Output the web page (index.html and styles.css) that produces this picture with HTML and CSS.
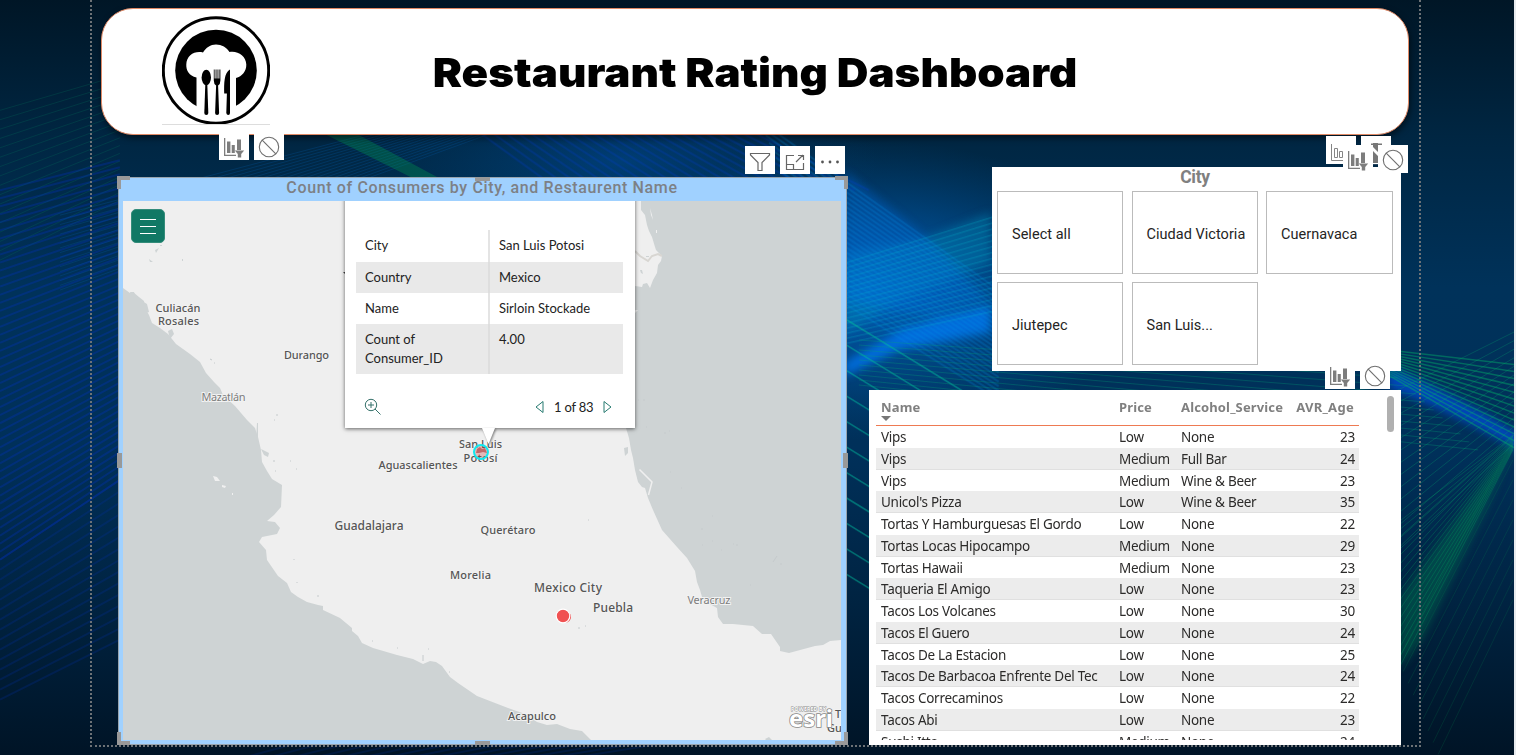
FILE: index.html
```html
<!DOCTYPE html>
<html lang="en">
<head>
<meta charset="utf-8">
<title>Restaurant Rating Dashboard</title>
<link rel="stylesheet" href="styles.css">
</head>
<body>
<svg class="backdrop" id="backdrop" viewBox="0 0 1516 755" aria-hidden="true">
  <defs>
    <radialGradient id="glow"><stop offset="0" stop-color="#0074ec" stop-opacity=".95"/><stop offset=".5" stop-color="#0068c8" stop-opacity=".5"/><stop offset="1" stop-color="#005aa8" stop-opacity="0"/></radialGradient>
    <filter id="soft" x="-30%" y="-30%" width="160%" height="160%"><feGaussianBlur stdDeviation="4"/></filter>
  </defs>
  <ellipse cx="870" cy="290" rx="270" ry="150" fill="url(#glow)" opacity=".75"/>
  <ellipse cx="620" cy="160" rx="260" ry="90" fill="url(#glow)" opacity=".3"/>
  <g filter="url(#soft)">
    <path d="M846 362L905 328L992 305V332L900 350L846 376Z" fill="#0078f4" opacity=".75"/>
    <path d="M846 252L920 240L992 212V262L900 300L846 335Z" fill="#0088b8" opacity=".4"/>
    <path d="M846 170L920 230L990 300L940 318L846 300Z" fill="#0068d8" opacity=".35"/>
    <path d="M1390 366Q1460 395 1524 436V452Q1450 410 1390 388Z" fill="#0050d8" opacity=".75"/>
    <path d="M1518 438L1485 515L1424 640L1400 670V600L1450 530Z" fill="#007a50" opacity=".4"/>
  </g>
</svg>

<svg class="sprites" aria-hidden="true">
  <symbol id="i-filter" viewBox="0 0 30 28"><g fill="#7d7d7d"><path d="M5 6h1.300v16.700H17V24H5z"/><path d="M8 9.500h3.400V21H8zM12.700 13h3.100v8h-3.100zM18 7.500h4V18h-4z"/><path d="M15.800 18.500h9.400l-3 3.500v3.500h-3.400V22z"/></g></symbol>
  <symbol id="i-none" viewBox="0 0 30 28"><g fill="none" stroke="#6e6e6e" stroke-width="1.1"><circle cx="15" cy="15" r="9.7"/><path d="M8.2 8.1L21.8 21.9"/></g></symbol>
  <symbol id="i-high" viewBox="0 0 30 28"><g fill="none" stroke="#858585"><path d="M5.500 8v16.500H18M8.500 12.500h3v9h-3zM13.500 15.500h3v6h-3z"/></g></symbol>
</svg>

<div class="report">
  <header class="banner">
    <svg class="logo" viewBox="0 0 108 110">
      <circle cx="54" cy="54.500" r="52.700" fill="#fff" stroke="#000" stroke-width="3"/>
      <circle cx="54" cy="54.500" r="40.800"/>
      <path fill="#fff" d="M34.500 61.500C27 60 24 54 24.300 48.500C24.500 39 33 34.500 41 36.500C44 31.500 48.500 28.500 54 28.500S65 31.500 67.500 36C75.500 34.500 84 39.500 84.300 48.500C84.500 55 80 60.500 74 62V100H34.500Z"/>
      <ellipse cx="44.300" cy="61.500" rx="4.700" ry="7.700"/><path d="M43.300 68h2l1 29q0 2-2 2t-2-2z"/>
      <path d="M51.800 53.500h.8v9h1v-9h.9v9h1v-9h.9v9h1v-9h1v11q0 3.500-2.300 5l1 27.500q0 2-2 2t-2-2l1-27.500q-2.300-1.500-2.300-5z"/>
      <path d="M68 53.500V97q0 2-1.700 2T64.300 97l.6-19.500h-2.700C62 67 62 57 68 53.500Z"/>
      <path d="M0 108.500h108" stroke="#ddd"/>
    </svg>
    <h1>Restaurant Rating Dashboard</h1>
    <div class="tools tools-banner"><span><svg><use href="#i-filter"/></svg></span><span><svg><use href="#i-none"/></svg></span></div>
  </header>

  <main class="board">
    <section class="map-card">
      <h2>Count of Consumers by City, and Restaurent Name</h2>
      <div class="map">
        <svg class="terrain" viewBox="123 201 718 539">
          <path class="sea" d="M123 288L130 293L133 292L139 297L144 301L145 308L149 315L152 323L160 328L168 334L176 344L190 354L200 362L206 373L214 382L220 388L223 395L235 406L247 420L255 428L258 437L261 450L262 462L267 471L272 479L282 485L281 507L274 515L267 521L275 522L280 528L277 534L262 537L259 542L266 550L267 560L278 576L287 583L291 592L298 597L307 602L318 605L323 606L323 610L340 618L352 628L352 631L358 636L362 643L373 648L397 655L413 659L423 664L430 661L436 662L442 666L450 677L458 683L477 696L508 708L525 714L537 722L547 725L557 724L570 729L582 731L591 740H123Z"/>
          <path class="sea" d="M641 201V210L645 215L647 225L649 231L652 237L655 247L656 250L662 256L661 261L658 265L657 273L653 280L650 288L647 283L643 284L642 287L635 286V310L638 310L635 313L626 428L629 438L631 450L633 458L635 470L638 482L642 487L645 488L648 498L653 510L662 530L677 547L687 558L695 571L697 582L700 590L702 597L708 603L717 608L718 617L723 624L733 624L753 626L762 634L771 634L780 647L780 651L789 653L815 646L823 645L830 641L841 640V201Z"/>
          <path class="bar" d="M639.500 469.500L652 482L648.500 495"/>
          <path d="M635 251l5 5 8 5 4-5 6-2 4 2" fill="none" stroke="#d8d6d2" stroke-width="2"/>
          <path fill="#f0f0f0" d="M213 476l4 1 3 4-5 0zM222 485l4 1-1 2-3-1zM232 493h1v2h-1zM650 208l2 7 1 5-2-5zM656 230h1v3h-1z"/>
          <path class="sea" d="M142 301l5 3 2 8-3 1zM168 331l4-2 2 5-4 5zM130 292l4 0 1 3-4 0zM261 449l8 4-1 4-4-2zM257 423h1v19h-2zM624 448l4-1v6l-3 3zM765 739l4-2 3 3h-6zM640 270h2l1 4-2-1zM646 256h3v1h-3zM155 250l4-2-3 5zM149 259l4 3h-3zM160 245h2v1h-2zM182 259h1v2h-1z"/>
          <path class="specks" d="M210 359l2 1m2 3h1m62 53v-2m-3 6h1m-2 41h2m15 0h1m5 8h1m-22 2h1m18 88v1m3 22v1m21 12v2m54 44h1m24 7h1m25 7v6m5-12h1m20 23h1m138-152h1m3-145h1m-32 3h1m53 35h1m22-13h1m4 0h2m1 27h1m17 6h2m3-2h1m0 41h1m10 16h1m30 28h1m-12 13h2m9 12h1m20 3h1m2 1h2m-36 0h1m18 5h1m55 6l-4 6m7 2h2m-32 21h1m-173 43h2m5-2h1"/>
          <path d="M343 272h2v2z" fill="#444"/>
          <g class="places">
            <text x="155.500" y="312" textLength="45">Culiacán</text><text x="158" y="325" textLength="41">Rosales</text>
            <text x="284" y="359" textLength="45">Durango</text><text class="minor" x="201.500" y="401" textLength="44">Mazatlán</text>
            <text x="459" y="448" textLength="43">San Luis</text><text x="463.500" y="461.500" textLength="34">Potosí</text>
            <text x="378.500" y="468.500" textLength="79">Aguascalientes</text><text class="major" x="334.500" y="530" textLength="69">Guadalajara</text>
            <text x="480.500" y="534" textLength="55">Querétaro</text><text x="450" y="578.500" textLength="41">Morelia</text>
            <text class="major" x="534" y="592" textLength="68">Mexico City</text><text class="major" x="593" y="611.500" textLength="40">Puebla</text>
            <text class="minor" x="687.500" y="604" textLength="43">Veracruz</text><text x="508" y="719.500" textLength="48">Acapulco</text>
            <text x="835" y="718">Tux</text><text x="827" y="732">Gutiérrez</text>
          </g>
          <circle cx="565.500" cy="617" r="5.500" fill="#f05152"/><circle cx="563" cy="616" r="6.800" fill="#f05152" stroke="#fff" stroke-width="1.200"/>
          <g class="esri"><text class="powered" x="791" y="711" textLength="35">POWERED BY</text><text x="789" y="727" textLength="44">esri</text></g>
        </svg>
        <button class="menu" aria-label="Menu"><i></i><i></i><i></i></button>
        <div class="popup">
          <dl>
            <dt>City</dt><dd>San Luis Potosi</dd>
            <dt class="shade">Country</dt><dd class="shade">Mexico</dd>
            <dt>Name</dt><dd>Sirloin Stockade</dd>
            <dt class="shade tall">Count of<br>Consumer_ID</dt><dd class="shade tall">4.00</dd>
          </dl>
          <div class="pager">
            <svg class="lens" viewBox="0 0 18 18"><g fill="none" stroke="#35716a"><circle cx="7" cy="7" r="5.700"/><path d="M4 7h6M7 4v6M11 11l5.500 5.500"/></g></svg>
            <svg class="arrow" viewBox="0 0 9 14"><path d="M8 1.500v11L1 7z"/></svg>
            <span>1 of 83</span>
            <svg class="arrow" viewBox="0 0 9 14"><path d="M1 1.500v11L8 7z"/></svg>
          </div>
          <svg class="pin" viewBox="0 0 30 34"><path class="tip" d="M9 0H22L15.500 16z" fill="#fff"/><circle cx="8" cy="24" r="7" fill="#c23b3b" fill-opacity=".3" stroke="#12e9ef" stroke-width="2"/><path d="M3 25l1-4 3-2 2 2 3-1 2 5-4-1-4 1z" fill="#c06a6a"/></svg>
        </div>
      </div>
      <i class="grip tl"></i><i class="grip tr"></i><i class="grip bl"></i><i class="grip br"></i>
      <i class="grip tc"></i><i class="grip bc"></i><i class="grip lc"></i><i class="grip rc"></i>
      <div class="tools tools-map">
        <span><svg viewBox="0 0 30 28"><path d="M5.500 7.500h19v1.500l-7.500 7.500v8h-4v-8L5.500 9z" fill="none" stroke="#666" stroke-width="1.200"/></svg></span>
        <span><svg viewBox="0 0 30 28"><path d="M14 9.500H6.500v14h17V17M6.500 18.500h7v5M16 16l7-7M18 9.500h5.500V14" fill="none" stroke="#666" stroke-width="1.200"/></svg></span>
        <span><svg viewBox="0 0 30 28"><g fill="#555"><circle cx="7.500" cy="16" r="1.400"/><circle cx="15" cy="16" r="1.400"/><circle cx="22.500" cy="16" r="1.400"/></g></svg></span>
      </div>
    </section>

    <div class="side">
      <section class="slicer">
        <h2>City</h2>
        <div class="tiles"><div>Select all</div><div>Ciudad Victoria</div><div>Cuernavaca</div><div>Jiutepec</div><div>San Luis...</div></div>
        <div class="tools tools-back"><span><svg><use href="#i-high"/></svg></span><span><svg viewBox="0 0 30 28"><path d="M10 7.500h11v2h-3v10h-5v-10h-3z" fill="#777"/></svg></span></div>
        <div class="tools tools-front"><span><svg><use href="#i-filter"/></svg></span><span><svg><use href="#i-none"/></svg></span></div>
        <svg class="peek" viewBox="0 0 5 24"><path d="M0 0h5v20H0z" fill="#fff"/><path d="M0 0h5v9L0 4zM0 8l5 5v7H0z" fill="#777"/><path d="M0 21.500h5" stroke="#27455f"/></svg>
      </section>

      <section class="table-card">
        <div class="grid">
          <div class="row head"><b>Name<i></i></b><b>Price</b><b>Alcohol_Service</b><b>AVR_Age</b></div>
          <div class="row"><span>Vips</span><span>Low</span><span>None</span><span>23</span></div>
          <div class="row"><span>Vips</span><span>Medium</span><span>Full Bar</span><span>24</span></div>
          <div class="row"><span>Vips</span><span>Medium</span><span>Wine &amp; Beer</span><span>23</span></div>
          <div class="row"><span>Unicol's Pizza</span><span>Low</span><span>Wine &amp; Beer</span><span>35</span></div>
          <div class="row"><span>Tortas Y Hamburguesas El Gordo</span><span>Low</span><span>None</span><span>22</span></div>
          <div class="row"><span>Tortas Locas Hipocampo</span><span>Medium</span><span>None</span><span>29</span></div>
          <div class="row"><span>Tortas Hawaii</span><span>Medium</span><span>None</span><span>23</span></div>
          <div class="row"><span>Taqueria El Amigo</span><span>Low</span><span>None</span><span>23</span></div>
          <div class="row"><span>Tacos Los Volcanes</span><span>Low</span><span>None</span><span>30</span></div>
          <div class="row"><span>Tacos El Guero</span><span>Low</span><span>None</span><span>24</span></div>
          <div class="row"><span>Tacos De La Estacion</span><span>Low</span><span>None</span><span>25</span></div>
          <div class="row"><span>Tacos De Barbacoa Enfrente Del Tec</span><span>Low</span><span>None</span><span>24</span></div>
          <div class="row"><span>Tacos Correcaminos</span><span>Low</span><span>None</span><span>22</span></div>
          <div class="row"><span>Tacos Abi</span><span>Low</span><span>None</span><span>23</span></div>
          <div class="row"><span>Sushi Itto</span><span>Medium</span><span>None</span><span>24</span></div>
        </div>
        <i class="scroll"></i>
        <div class="tools tools-table"><span><svg><use href="#i-filter"/></svg></span><span><svg><use href="#i-none"/></svg></span></div>
      </section>
    </div>
  </main>
</div>
<script src="backdrop.js"></script>
</body>
</html>
```

FILE: backdrop.js
```js
// Draws fans of fine light rays: each ray joins matching points of two segments.
const host = document.getElementById('backdrop');
function fan(a, b, c, d, count, color, opacity, width = 1) {
  let path = '';
  for (let i = 0; i <= count; i++) {
    const t = i / count;
    const mix = (p, q) => (p + (q - p) * t).toFixed(1);
    path += `M${mix(a[0], b[0])} ${mix(a[1], b[1])}L${mix(c[0], d[0])} ${mix(c[1], d[1])}`;
  }
  const el = document.createElementNS('http://www.w3.org/2000/svg', 'path');
  el.setAttribute('d', path);
  el.setAttribute('stroke', color);
  el.setAttribute('stroke-width', width);
  el.setAttribute('opacity', opacity);
  el.setAttribute('fill', 'none');
  host.appendChild(el);
}
// left margin
fan([0, 110], [0, 260], [120, 75], [120, 200], 16, '#007a5c', .25);
fan([0, 190], [0, 560], [120, 160], [120, 480], 46, '#0034d0', .28, 2);
fan([0, 560], [0, 700], [120, 480], [120, 640], 14, '#0034b0', .22, 2);
// strip under the banner
fan([60, 215], [60, 290], [420, 120], [500, 130], 16, '#0058a0', .3);
fan([300, 120], [330, 120], [440, 190], [460, 190], 8, '#00a850', .3, 2);
fan([470, 125], [740, 125], [560, 190], [870, 190], 22, '#0040e0', .25, 2);
// centre gap
fan([760, 120], [840, 300], [1000, 290], [1000, 400], 24, '#0090e8', .25, 2);
fan([840, 265], [840, 345], [1000, 215], [1000, 310], 16, '#00c0d0', .35);
fan([840, 315], [840, 570], [1060, 450], [1060, 705], 10, '#00c0a0', .5, 1.5);
fan([860, 340], [860, 385], [1400, 378], [1480, 450], 9, '#00a878', .32);
// right margin
fan([1390, 395], [1390, 560], [1520, 330], [1520, 440], 13, '#00ac70', .28);
fan([1390, 350], [1390, 375], [1520, 365], [1520, 450], 12, '#00b868', .42, 1.5);
fan([1515, 435], [1515, 450], [1390, 530], [1400, 670], 16, '#00a060', .3);
fan([1515, 440], [1515, 600], [1400, 660], [1440, 755], 8, '#008850', .2);
// lower edge
fan([200, 770], [500, 770], [330, 735], [720, 735], 14, '#0030a0', .2, 2);
```

FILE: styles.css
```css
* { box-sizing: border-box; }
body {
  margin: 0; width: 1516px; height: 755px; overflow: hidden; position: relative;
  border-right: 2px solid #e8ebee;
  font-family: "Noto Sans", "Open Sans", sans-serif;
  background: linear-gradient(#001626 0, #002642 18%, #00325a 38%, #00305a 60%, #002341 80%, #001426 100%);
}
h1, h2, dl, dd { margin: 0; }
.backdrop { position: absolute; left: 0; top: 0; width: 1514px; height: 755px; z-index: -1; }
.sprites { position: absolute; width: 0; height: 0; }

.report { width: 1331px; height: 747px; margin-left: 90px; padding: 8px 0 0 9px; border: 2px dotted #6d7276; border-top: 0; }

.banner { position: relative; width: 1308px; height: 127px; background: #fff; border: 1px solid #e08a66; border-radius: 32px; box-shadow: 1px 3px 6px #0008; display: flex; align-items: center; }
.logo { width: 108px; height: 110px; margin: 0 0 1px 60px; flex: none; }
h1 { position: absolute; left: 0; right: 0; top: 40px; text-align: center; font: 900 40px/48px Inter, sans-serif; color: #000; white-space: nowrap; transform: scaleX(1.097); }

.tools { position: absolute; display: flex; gap: 5px; }
.tools span { width: 30px; height: 28px; background: #fff; }
.tools svg { display: block; width: 30px; height: 28px; }
.tools-banner { left: 117px; top: 123px; }
.tools-map { right: 1px; top: -32px; }
.tools-back { left: 334px; top: -31px; }
.tools-front { left: 351px; top: -22px; }
.tools-table { left: 456px; top: -29px; }
.peek { position: absolute; left: 381px; top: -24px; width: 5px; height: 24px; }

.board { display: flex; padding-left: 17px; align-items: flex-start; }
.map-card { position: relative; width: 729px; height: 568px; margin: 42px 22px 0 0; padding: 0 5px 4px 4px; background: #a0d1ff; border: 1px solid #98a4ae; }
.map-card h2 { height: 23px; font: 500 16px/20px Roboto, sans-serif; color: #7d8085; text-align: center; letter-spacing: .64px; }
.map { position: relative; width: 718px; height: 539px; overflow: hidden; background: #efefef; }
.terrain { display: block; width: 718px; height: 539px; }
.sea { fill: #ced3d4; }
.bar { fill: none; stroke: #efefef; stroke-width: 1.5; }
.specks { stroke: #c5cacc; fill: none; }
.places text { font: 500 11px "Noto Sans", sans-serif; fill: #555; stroke: #f2f2f2; stroke-width: 2px; paint-order: stroke; }
.places .major { font-size: 12px; }
.places .minor { fill: #7c7c7c; font-weight: 400; }
.esri text { font: 700 24px "Noto Sans", sans-serif; fill: #fff; stroke: #888; stroke-width: 1.6px; paint-order: stroke; }
.esri .powered { font-size: 5.5px; stroke-width: .8px; }

.menu { position: absolute; left: 8px; top: 8px; width: 34px; height: 34px; padding: 0 8px; border: 1px solid #348c7a; border-radius: 5px; background: #117865; display: flex; flex-direction: column; justify-content: center; gap: 6px; }
.menu i { height: 1px; background: #fff; }

.popup { position: absolute; left: 222px; top: -6px; width: 290px; height: 233px; padding: 35px 11px 0; background: #fff; box-shadow: 0 1px 4px #0009; font: 400 13px/19px Lato, sans-serif; color: #222; }
.popup dl { display: grid; grid-template-columns: 132px 135px; grid-template-rows: 32px 31px 31px 50px; }
.popup dt, .popup dd { padding: 6px 9px 0; white-space: nowrap; }
.popup dd { border-left: 2px solid #e4e4e4; }
.popup .shade { background: #e9e9e9; }
.popup dd.shade { border-color: #dedede; }
.pager { display: flex; align-items: center; margin-top: 23px; padding: 0 10px 0 8px; height: 20px; }
.lens { width: 18px; height: 18px; margin-right: 153px; }
.pager span { width: 40px; margin: 0 9px 0 10px; white-space: nowrap; letter-spacing: -.2px; }
.arrow { width: 9px; height: 14px; }
.arrow path { fill: none; stroke: #267a70; }
.pin { position: absolute; left: 128px; top: 233px; width: 30px; height: 34px; overflow: visible; }
.tip { filter: drop-shadow(1px 1px 1px #0007); }

.grip { position: absolute; background: #999; }
.tl, .tr, .bl, .br { width: 13px; height: 13px; background: none; border: 0 solid #999; }
.tl { left: -2px; top: -2px; border-width: 4px 0 0 4px; }
.tr { right: -2px; top: -2px; border-width: 4px 4px 0 0; }
.bl { left: -2px; bottom: -1px; border-width: 0 0 4px 4px; }
.br { right: -2px; bottom: -1px; border-width: 0 4px 4px 0; }
.tc, .bc { width: 15px; height: 4px; left: 356px; }
.tc { top: -1px; }
.bc { bottom: -1px; }
.lc, .rc { width: 5px; height: 15px; top: 275px; }
.lc { left: -2px; }
.rc { right: -2px; }

.side { width: 532px; padding-top: 32px; }
.slicer { position: relative; width: 409px; height: 204px; margin: 0 0 19px 123px; padding: 0 8px 0 5px; background: #fff; }
.slicer h2 { height: 24px; font: 700 17.5px/20px Roboto, sans-serif; letter-spacing: -.3px; color: #808080; text-align: center; }
.tiles { display: grid; grid-template-columns: 126px 126px 127px; grid-template-rows: 83px 83px; gap: 8px; justify-content: space-between; }
.tiles div { border: 1px solid #bbb; padding: 3px 0 0 14px; display: flex; align-items: center; font: 400 14.5px Roboto, sans-serif; color: #252423; letter-spacing: .03px; white-space: nowrap; }

.table-card { position: relative; height: 355px; padding-left: 7px; background: #fff; }
.grid { width: 483px; height: 350px; overflow: hidden; }
.row { display: grid; grid-template-columns: 238px 62px 113px 1fr; height: 21.75px; padding: 0 4px 0 5px; font-size: 13.5px; letter-spacing: -.28px; line-height: 22.8px; color: #2c2b2a; white-space: nowrap; }
.row:nth-child(odd):not(.head) { background: #ececec; border-bottom: 1px solid #e0e0e0; }
.row > :last-child { text-align: right; }
.row.head { height: 36px; padding-top: 7px; border-bottom: 1px solid #ee7a52; color: #808080; font-size: 13px; letter-spacing: .14px; line-height: 21px; }
.head b { position: relative; font-weight: 700; }
.head b:last-child { margin-right: 1px; letter-spacing: .3px; }
.head i { position: absolute; left: 0; top: 19px; border: 5px solid transparent; border-top-color: #777; border-bottom: 0; }
.scroll { position: absolute; right: 7px; top: 6px; width: 7px; height: 36px; border-radius: 4px; background: #b0b0b0; }
```
